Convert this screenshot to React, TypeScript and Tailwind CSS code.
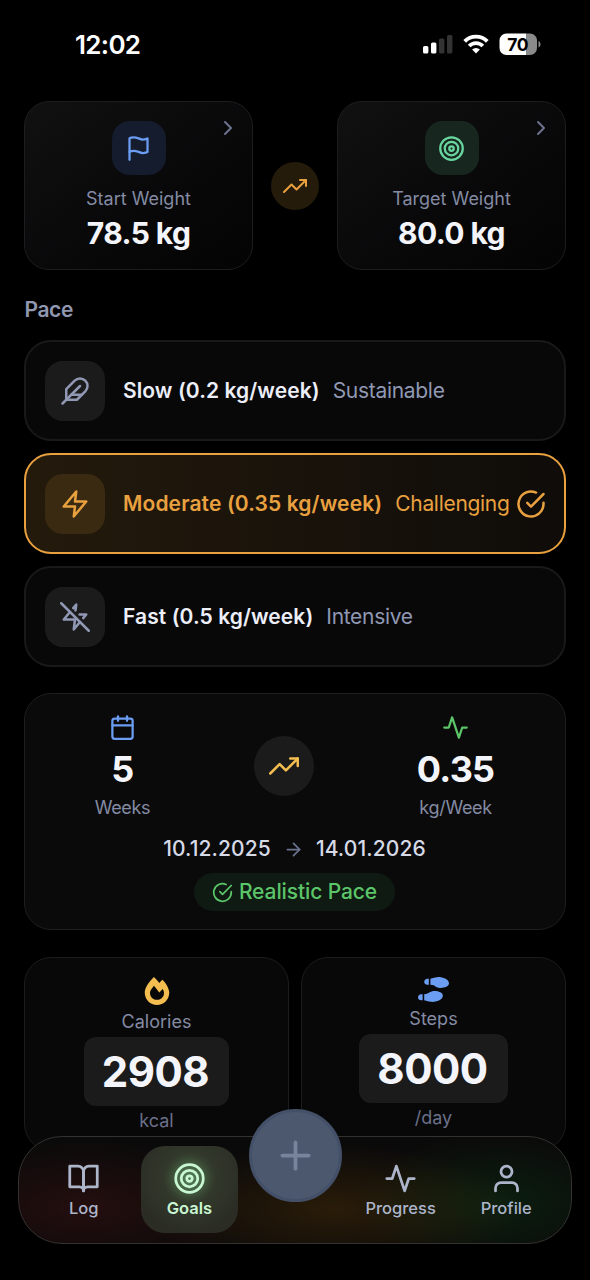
import type { ComponentType, ReactNode } from "react";
import {
  FiActivity,
  FiArrowRight,
  FiBookOpen,
  FiCalendar,
  FiCheckCircle,
  FiChevronRight,
  FiFeather,
  FiFlag,
  FiPlus,
  FiTarget,
  FiTrendingUp,
  FiUser,
  FiZap,
  FiZapOff,
} from "react-icons/fi";
import { FaFireAlt, FaShoePrints } from "react-icons/fa";

type Icon = ComponentType<{ size?: number; className?: string }>;

interface Pace {
  name: string;
  hint: string;
  icon: Icon;
}

const paces: Pace[] = [
  { name: "Slow (0.2 kg/week)", hint: "Sustainable", icon: FiFeather },
  { name: "Moderate (0.35 kg/week)", hint: "Challenging", icon: FiZap },
  { name: "Fast (0.5 kg/week)", hint: "Intensive", icon: FiZapOff },
];

function StatusBar() {
  return (
    <header className="flex h-[101px] items-start justify-between pt-[29px] pr-[49px] pl-[75px] text-white">
      <span className="text-[26px] leading-[31px] font-semibold tracking-[-0.7px]">12:02</span>
      <svg width="118" height="26" viewBox="0 0 118 26" className="mt-[2px]">
        <rect x="0" y="15" width="5.4" height="7.5" rx="1.6" fill="#fff" />
        <rect x="8" y="11.5" width="5.4" height="11" rx="1.6" fill="#fff" />
        <rect x="16" y="7.5" width="5.4" height="15" rx="1.6" fill="#333" />
        <rect x="24" y="4" width="5.4" height="18.5" rx="1.6" fill="#333" />
        <g fill="none" stroke="#fff" strokeWidth="3.8">
          <path d="M41.7 10.4a15.8 15.8 0 0 1 22.6 0" />
          <path d="M46.2 15a9.4 9.4 0 0 1 13.6 0" />
        </g>
        <path d="M53 22.5l-3.9-4a5.6 5.6 0 0 1 7.8 0z" fill="#fff" />
        <path d="M83.5 2.5h20V24h-20a7 7 0 0 1-7-7V9.5a7 7 0 0 1 7-7z" fill="#fff" />
        <path d="M103.5 2.5h3.5a7 7 0 0 1 7 7V17a7 7 0 0 1-7 7h-3.5z" fill="#8a8a8a" />
        <path d="M115.5 10c2.600 1 2.600 5.600 0 6.600z" fill="#8a8a8a" />
        <text x="94.7" y="19.600" textAnchor="middle" fontSize="17.5" fontWeight="700" letterSpacing="-0.5" fill="#000">
          70
        </text>
      </svg>
    </header>
  );
}

function WeightCard({ label, value, children }: { label: string; value: string; children: ReactNode }) {
  return (
    <section className="relative flex h-[169px] w-[229px] flex-col items-center rounded-[25px] border border-[#1d1d1f] bg-linear-to-br from-[#111112] to-[#040405] pt-[19px]">
      {children}
      <p className="mt-[11px] text-[18px] leading-[26px] text-[#848ba3]">{label}</p>
      <p className="mt-[2px] text-[30px] leading-[38px] font-bold tracking-[-0.6px] text-[#f4f5fa]">{value}</p>
      <FiChevronRight size={24} className="absolute top-[13.5px] right-[12.5px] text-[#6c738c]" />
    </section>
  );
}

function PaceRow({ pace, selected }: { pace: Pace; selected: boolean }) {
  const PaceIcon = pace.icon;
  return (
    <div
      className={
        selected
          ? "flex h-[101px] items-center rounded-[27px] border-2 border-[#e9a140] bg-linear-to-r from-[#241a0c] to-[#0f0c09] pr-[18px] pl-[19px] text-[#e9a140]"
          : "flex h-[101px] items-center rounded-[27px] border-2 border-[#19191a] bg-[#080809] pr-[18px] pl-[19px] text-[#9098b3]"
      }
    >
      <div
        className={
          selected
            ? "flex size-[60px] items-center justify-center rounded-[18px] bg-[#3a2a11]"
            : "flex size-[60px] items-center justify-center rounded-[18px] bg-[#1b1b1c]"
        }
      >
        <PaceIcon size={30} />
      </div>
      <span
        className={
          selected
            ? "ml-[18px] text-[21px] font-semibold tracking-[0.12px] whitespace-nowrap"
            : "ml-[18px] text-[21px] font-semibold tracking-[0.08px] whitespace-nowrap text-[#eceef8]"
        }
      >
        {pace.name}
      </span>
      <span className="ml-[13px] text-[21px] tracking-[-0.3px] whitespace-nowrap">{pace.hint}</span>
      {selected && <FiCheckCircle size={30} className="ml-auto shrink-0" />}
    </div>
  );
}

function Stat({ value, unit, children }: { value: string; unit: string; children: ReactNode }) {
  return (
    <div className="flex flex-col items-center">
      {children}
      <p className="mt-[6px] text-[36px] leading-[44px] font-bold tracking-[-0.8px] text-[#f4f5fa]">{value}</p>
      <p className="mt-[5px] text-[18px] leading-[24px] tracking-[-0.3px] text-[#848ba3]">{unit}</p>
    </div>
  );
}

function GoalCard({ label, value, unit, children }: { label: string; value: string; unit: string; children: ReactNode }) {
  return (
    <section className="flex h-[194px] flex-1 flex-col items-center rounded-[27px] border border-[#1c1c1d] bg-[#080809] pt-[19px]">
      {children}
      <p className="mt-[4px] text-[18px] leading-[26px] text-[#848ba3]">{label}</p>
      <p className="mt-[2px] rounded-[12px] bg-[#1b1b1c] pr-[20px] pl-[18px] text-[42px] leading-[69px] font-bold tracking-[-0.5px] text-[#f4f5fa]">
        {value}
      </p>
      <p className="mt-[3px] text-[18px] leading-[24px] text-[#6a7088]">{unit}</p>
    </section>
  );
}

function Tab({ label, icon: TabIcon, active }: { label: string; icon: Icon; active?: boolean }) {
  return (
    <div
      className={
        active
          ? "mx-[4.5px] flex h-[87px] min-w-0 flex-1 flex-col items-center rounded-[24px] bg-[radial-gradient(circle_at_50%_36%,#3f5539_0%,#32382b_35%,#2b2d25_75%)] pt-[16px] text-[#c9f7d2]"
          : "mx-[4.5px] flex h-[87px] min-w-0 flex-1 flex-col items-center pt-[16px] text-[#adb5ca]"
      }
    >
      <TabIcon
        size={33}
        className={active ? "drop-shadow-[0_0_6px_rgba(134,239,160,0.45)]" : ""}
      />
      <span
        className={
          active
            ? "mt-[2px] text-[16.5px] leading-[22px] font-semibold"
            : "mt-[2px] text-[16.5px] leading-[22px] font-medium"
        }
      >
        {label}
      </span>
    </div>
  );
}

function TabBar() {
  return (
    <nav className="absolute top-[1136px] right-[18px] left-[18px] flex h-[108px] items-start rounded-[44px] border border-[#343230] bg-[#0b0a0a] bg-[radial-gradient(ellipse_170px_66px_at_12%_66%,rgba(127,29,29,0.22),transparent),radial-gradient(ellipse_190px_64px_at_57%_68%,rgba(180,110,0,0.18),transparent),radial-gradient(ellipse_140px_70px_at_87%_62%,rgba(10,110,35,0.2),transparent)] px-[12px] pt-[9px]">
      <Tab label="Log" icon={FiBookOpen} />
      <Tab label="Goals" icon={FiTarget} active />
      <div className="mr-[4px] ml-[5px] flex min-w-0 flex-1 justify-center">
        <button className="-mt-[37px] flex size-[93px] shrink-0 items-center justify-center rounded-full border-[3px] border-[#435068] bg-[#4c586e] text-[#78849b]">
          <FiPlus size={45} />
        </button>
      </div>
      <Tab label="Progress" icon={FiActivity} />
      <Tab label="Profile" icon={FiUser} />
    </nav>
  );
}

export default function App() {
  return (
    <div className="relative h-[1280px] w-[590px] overflow-hidden bg-black font-['Inter',sans-serif]">
      <StatusBar />
      <main className="px-[24px]">
        <div className="flex items-center justify-between">
          <WeightCard label="Start Weight" value="78.5 kg">
            <div className="flex size-[54px] items-center justify-center rounded-[18px] bg-[#141c2d] text-[#6b9df2]">
              <FiFlag size={27} />
            </div>
          </WeightCard>
          <div className="flex size-[48px] items-center justify-center rounded-full bg-[#241b0b] text-[#e9a140]">
            <FiTrendingUp size={24} />
          </div>
          <WeightCard label="Target Weight" value="80.0 kg">
            <div className="flex size-[54px] items-center justify-center rounded-[18px] bg-[#17271f] text-[#69d6a0]">
              <FiTarget size={27} />
            </div>
          </WeightCard>
        </div>

        <h2 className="mt-[26px] pl-[0.5px] text-[21px] leading-[28px] font-semibold tracking-[-0.4px] text-[#9097b0]">Pace</h2>
        <div className="mt-[16px] flex flex-col gap-[12px]">
          {paces.map((pace) => (
            <PaceRow key={pace.name} pace={pace} selected={pace.hint === "Challenging"} />
          ))}
        </div>

        <section className="mt-[26px] h-[237px] rounded-[27px] border border-[#1e1e1f] bg-[#0a0a0b] pr-[19px] pl-[18px] pt-[20px]">
          <div className="flex items-center justify-around">
            <Stat value="5" unit="Weeks">
              <FiCalendar size={27} className="text-[#6b9df2]" />
            </Stat>
            <div className="-mt-[3px] flex size-[60px] items-center justify-center rounded-full bg-[#1b1b1c] text-[#f3bd50]">
              <FiTrendingUp size={30} />
            </div>
            <Stat value="0.35" unit="kg/Week">
              <FiActivity size={27} className="text-[#5cc569]" />
            </Stat>
          </div>
          <div className="mt-[14px] flex items-center justify-center gap-[12px] text-[21px] leading-[30px] font-medium tracking-[0.1px] text-[#d6d9e6]">
            <span>10.12.2025</span>
            <FiArrowRight size={21} className="text-[#6c738c]" />
            <span>14.01.2026</span>
          </div>
          <div className="mt-[9px] flex justify-center">
            <div className="flex h-[38px] items-center gap-[6px] rounded-full bg-[#0f1a12] px-[18px] text-[21px] font-medium tracking-[-0.1px] text-[#5cc569]">
              <FiCheckCircle size={21} />
              Realistic Pace
            </div>
          </div>
        </section>

        <div className="mt-[27px] flex gap-[12px]">
          <GoalCard label="Calories" value="2908" unit="kcal">
            <FaFireAlt size={28} className="text-[#f3bd50]" />
          </GoalCard>
          <GoalCard label="Steps" value="8000" unit="/day">
            <FaShoePrints size={31} className="-my-[3px] text-[#6b9df2]" />
          </GoalCard>
        </div>
      </main>
      <TabBar />
    </div>
  );
}
